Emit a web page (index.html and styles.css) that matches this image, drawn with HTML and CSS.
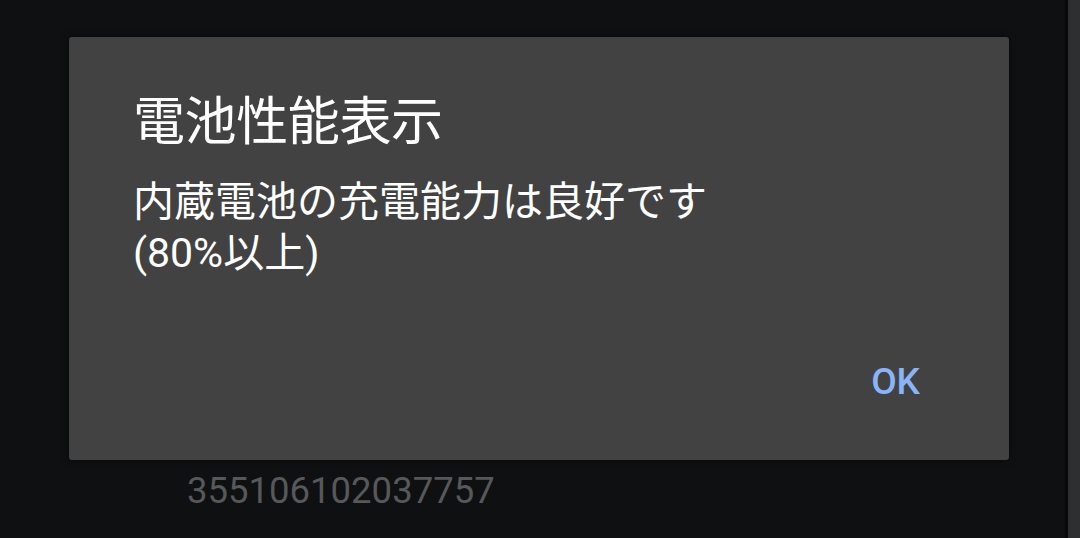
FILE: index.html
```html
<!DOCTYPE html>
<html lang="ja">
<head>
<meta charset="utf-8">
<link rel="stylesheet" href="styles.css">
</head>
<body>
<div class="screen">
  <div class="main">
    <div class="dialog">
      <div class="title">電池性能表示</div>
      <div class="message">内蔵電池の充電能力は良好です<br>(80%以上)</div>
      <div class="actions"><span class="ok">OK</span></div>
    </div>
    <div class="imei">355106102037757</div>
  </div>
  <div class="edge"></div>
</div>
</body>
</html>
```
FILE: styles.css
```css
html, body {
  margin: 0;
  padding: 0;
  background: #0e1012;
  width: 1080px;
  height: 538px;
  overflow: hidden;
  font-family: Roboto, "Noto Sans CJK JP", sans-serif;
}
.screen {
  display: flex;
  width: 1080px;
  height: 538px;
}
.main {
  flex: 1;
  padding: 37px 0 0 69px;
  border-right: 3px solid #08090a;
}
.edge {
  width: 12px;
  background: #2e2f31;
}
.dialog {
  width: 940px;
  height: 423px;
  box-sizing: border-box;
  background: #424242;
  border-radius: 3px;
  padding: 56px 64px 0 64px;
  display: flex;
  flex-direction: column;
  box-shadow: 0 0 6px rgba(0,0,0,0.6);
}
.title {
  color: #ffffff;
  font-size: 52px;
  line-height: 60px;
  letter-spacing: -0.4px;
}
.message {
  color: #ffffff;
  font-size: 41px;
  line-height: 51px;
  margin-top: 24px;
}
.actions {
  display: flex;
  justify-content: flex-end;
  margin-top: 81px;
  padding-right: 25px;
}
.ok {
  color: #8ab4f8;
  font-size: 37px;
  font-weight: 500;
  line-height: 44px;
}
.imei {
  color: #575859;
  font-size: 36.5px;
  line-height: 44px;
  margin: 9px 0 0 118px;
}
```
